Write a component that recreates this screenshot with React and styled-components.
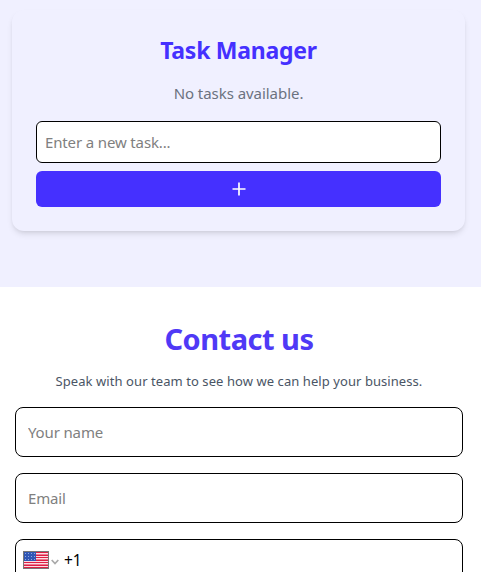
import React from "react";
import styled, { createGlobalStyle } from "styled-components";

const GlobalStyle = createGlobalStyle`
  *, *::before, *::after { box-sizing: border-box; }
  html { overflow: hidden; }
  body {
    margin: 0;
    background: #fff;
    font-family: "Segoe UI", "Noto Sans", "Open Sans", sans-serif;
    font-size: 15px;
    line-height: 24px;
  }
  h1, h2, p { margin: 0; }
  input, button { font: inherit; }
`;

const Page = styled.div`
  width: 481px;
  height: 572px;
  overflow: hidden;
`;

const TaskSection = styled.section`
  height: 287px;
  padding: 10px 16px 0 12px;
  background: #f0f0ff;
`;

const TaskCard = styled.div`
  height: 221px;
  padding: 24px;
  border-radius: 12px;
  background: #f0f0ff;
  box-shadow: 0 4px 6px -1px rgba(0, 0, 0, 0.1), 0 2px 4px -2px rgba(0, 0, 0, 0.1);
  text-align: center;
`;

const TaskTitle = styled.h1`
  color: #4530ff;
  font-size: 23px;
  font-weight: 700;
  line-height: 32px;
  letter-spacing: -0.25px;
`;

const EmptyText = styled.p`
  margin-top: 15px;
  color: #6b7280;
  letter-spacing: -0.05px;
`;

const TaskForm = styled.form`
  display: flex;
  flex-direction: column;
  gap: 8px;
  margin-top: 16px;
`;

const TextInput = styled.input`
  display: block;
  width: 100%;
  height: ${(p) => (p.$large ? 50 : 42)}px;
  padding: 0 ${(p) => (p.$large ? 12 : 8)}px;
  border: 1px solid #000;
  border-radius: ${(p) => (p.$large ? 8 : 6)}px;
  background: #fff;
  outline: none;
  letter-spacing: -0.14px;
  &::placeholder { color: #808080; opacity: 1; }
`;

const AddButton = styled.button`
  display: flex;
  align-items: center;
  justify-content: center;
  height: 36px;
  padding: 0;
  border: 0;
  border-radius: 6px;
  background: #4530ff;
  color: #fff;
`;

const ContactSection = styled.section`
  padding: 32px 18px 0 15px;
  text-align: center;
`;

const ContactTitle = styled.h2`
  color: #4f39f6;
  font-size: 29px;
  font-weight: 700;
  line-height: 40px;
  letter-spacing: -0.5px;
`;

const ContactText = styled.p`
  margin-top: 12px;
  color: #4a5565;
  font-size: 13px;
  line-height: 20px;
  letter-spacing: 0.07px;
`;

const ContactForm = styled.form`
  display: flex;
  flex-direction: column;
  gap: 16px;
  margin-top: 16px;
`;

const PhoneField = styled.div`
  display: flex;
  align-items: flex-start;
  height: 50px;
  padding: 11px 7px 0;
  border: 1px solid #000;
  border-radius: 8px;
`;

const Chevron = styled.svg`
  margin: 8px 0 0 2px;
`;

const DialCode = styled.span`
  margin: -3px 0 0 5px;
  color: #000;
  font-size: 15.5px;
`;

const starRows = [3, 6, 9];
const starCols = [3, 6, 9, 12];

function UsFlag() {
  return (
    <svg width="26" height="18" viewBox="0 0 26 18" shapeRendering="crispEdges">
      <rect width="26" height="18" fill="#fbdce2" />
      {[1, 4, 6, 9, 11, 14, 16].map((y) => (
        <rect key={y} y={y} width="26" height="1" fill="#dc1f45" />
      ))}
      {[3, 8, 13].map((y) => (
        <rect key={y} y={y} width="26" height="1" fill="#ee7890" />
      ))}
      <rect width="13" height="10" fill="#3157b5" />
      {starRows.map((y) =>
        starCols.map((x) => (
          <rect key={`${x}-${y}`} x={x - 1} y={y - 1} width="1" height="1" fill="#91a9dc" />
        ))
      )}
      <rect x="0.5" y="0.5" width="25" height="17" fill="none" stroke="#777" />
    </svg>
  );
}

export default function App() {
  return (
    <>
      <GlobalStyle />
      <Page>
        <TaskSection>
          <TaskCard>
            <TaskTitle>Task Manager</TaskTitle>
            <EmptyText>No tasks available.</EmptyText>
            <TaskForm>
              <TextInput placeholder="Enter a new task..." />
              <AddButton type="button" aria-label="Add task">
                <svg width="14" height="14" viewBox="0 0 14 14" fill="none" stroke="currentColor" strokeWidth="1.7">
                  <path d="M0.5 7H13.5M7 0.5V13.5" />
                </svg>
              </AddButton>
            </TaskForm>
          </TaskCard>
        </TaskSection>
        <ContactSection>
          <ContactTitle>Contact us</ContactTitle>
          <ContactText>Speak with our team to see how we can help your business.</ContactText>
          <ContactForm>
            <TextInput $large placeholder="Your name" />
            <TextInput $large placeholder="Email" />
            <PhoneField>
              <UsFlag />
              <Chevron width="8" height="6" viewBox="0 0 8 6" fill="none" stroke="#aaa" strokeWidth="1.7">
                <path d="M0.7 1L4 4.5L7.3 1" />
              </Chevron>
              <DialCode>+1</DialCode>
            </PhoneField>
          </ContactForm>
        </ContactSection>
      </Page>
    </>
  );
}
